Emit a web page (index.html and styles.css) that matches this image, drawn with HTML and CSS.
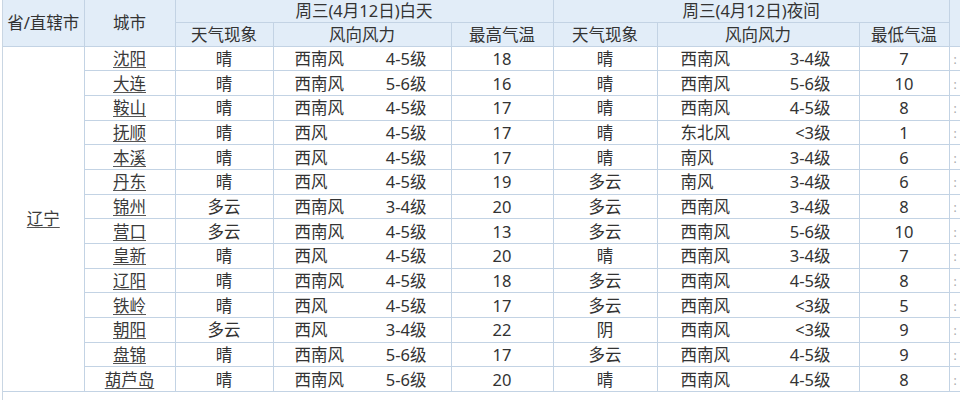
FILE: index.html
```html
<!DOCTYPE html>
<html lang="zh-CN">
<head>
<meta charset="utf-8">
<title>辽宁天气预报</title>
<link rel="stylesheet" href="styles.css">
</head>
<body>
<div class="wrap">
<table class="wx">
<colgroup>
<col class="c-prov"><col class="c-city"><col class="c-wea"><col class="c-wind"><col class="c-temp"><col class="c-wea2"><col class="c-wind2"><col class="c-temp2"><col class="c-extra">
</colgroup>
<thead>
<tr class="h1">
<th rowspan="2">省/直辖市</th>
<th rowspan="2">城市</th>
<th colspan="3">周三(4月12日)白天</th>
<th colspan="3">周三(4月12日)夜间</th>
<th rowspan="2" class="extra"></th>
</tr>
<tr class="h2">
<th>天气现象</th><th>风向风力</th><th>最高气温</th>
<th>天气现象</th><th>风向风力</th><th>最低气温</th>
</tr>
</thead>
<tbody>
<tr><td rowspan="14" class="prov"><a href="#">辽宁</a></td><td><a href="#">沈阳</a></td><td>晴</td><td class="wind"><span>西南风</span><span>4-5级</span></td><td>18</td><td>晴</td><td class="wind n"><span>西南风</span><span>3-4级</span></td><td>7</td><td class="extra"><i>:</i></td></tr>
<tr><td><a href="#">大连</a></td><td>晴</td><td class="wind"><span>西南风</span><span>5-6级</span></td><td>16</td><td>晴</td><td class="wind n"><span>西南风</span><span>5-6级</span></td><td>10</td><td class="extra"><i>:</i></td></tr>
<tr><td><a href="#">鞍山</a></td><td>晴</td><td class="wind"><span>西南风</span><span>4-5级</span></td><td>17</td><td>晴</td><td class="wind n"><span>西南风</span><span>4-5级</span></td><td>8</td><td class="extra"><i>:</i></td></tr>
<tr><td><a href="#">抚顺</a></td><td>晴</td><td class="wind"><span>西风</span><span>4-5级</span></td><td>17</td><td>晴</td><td class="wind n"><span>东北风</span><span>&lt;3级</span></td><td>1</td><td class="extra"><i>:</i></td></tr>
<tr><td><a href="#">本溪</a></td><td>晴</td><td class="wind"><span>西风</span><span>4-5级</span></td><td>17</td><td>晴</td><td class="wind n"><span>南风</span><span>3-4级</span></td><td>6</td><td class="extra"><i>:</i></td></tr>
<tr><td><a href="#">丹东</a></td><td>晴</td><td class="wind"><span>西风</span><span>4-5级</span></td><td>19</td><td>多云</td><td class="wind n"><span>南风</span><span>3-4级</span></td><td>6</td><td class="extra"><i>:</i></td></tr>
<tr><td><a href="#">锦州</a></td><td>多云</td><td class="wind"><span>西南风</span><span>3-4级</span></td><td>20</td><td>多云</td><td class="wind n"><span>西南风</span><span>3-4级</span></td><td>8</td><td class="extra"><i>:</i></td></tr>
<tr><td><a href="#">营口</a></td><td>多云</td><td class="wind"><span>西南风</span><span>4-5级</span></td><td>13</td><td>多云</td><td class="wind n"><span>西南风</span><span>5-6级</span></td><td>10</td><td class="extra"><i>:</i></td></tr>
<tr><td><a href="#">皇新</a></td><td>晴</td><td class="wind"><span>西风</span><span>4-5级</span></td><td>20</td><td>晴</td><td class="wind n"><span>西南风</span><span>3-4级</span></td><td>7</td><td class="extra"><i>:</i></td></tr>
<tr><td><a href="#">辽阳</a></td><td>晴</td><td class="wind"><span>西南风</span><span>4-5级</span></td><td>18</td><td>多云</td><td class="wind n"><span>西南风</span><span>4-5级</span></td><td>8</td><td class="extra"><i>:</i></td></tr>
<tr><td><a href="#">铁岭</a></td><td>晴</td><td class="wind"><span>西风</span><span>4-5级</span></td><td>17</td><td>多云</td><td class="wind n"><span>西南风</span><span>&lt;3级</span></td><td>5</td><td class="extra"><i>:</i></td></tr>
<tr><td><a href="#">朝阳</a></td><td>多云</td><td class="wind"><span>西风</span><span>3-4级</span></td><td>22</td><td>阴</td><td class="wind n"><span>西南风</span><span>&lt;3级</span></td><td>9</td><td class="extra"><i>:</i></td></tr>
<tr><td><a href="#">盘锦</a></td><td>晴</td><td class="wind"><span>西南风</span><span>5-6级</span></td><td>17</td><td>多云</td><td class="wind n"><span>西南风</span><span>4-5级</span></td><td>9</td><td class="extra"><i>:</i></td></tr>
<tr><td><a href="#">葫芦岛</a></td><td>晴</td><td class="wind"><span>西南风</span><span>5-6级</span></td><td>20</td><td>晴</td><td class="wind n"><span>西南风</span><span>4-5级</span></td><td>8</td><td class="extra"><i>:</i></td></tr>
</tbody>
</table>
</div>
</body>
</html>
```
FILE: styles.css
```css
html, body {
  margin: 0;
  padding: 0;
  background: #fff;
  overflow: hidden;
  height: 400px;
}
body {
  font-family: "Noto Sans", "Noto Sans CJK SC", sans-serif;
  font-size: 16.5px;
  color: #333;
}
.wrap {
  margin-left: 2px;
  width: 990px;
  height: 420px;
  border-left: 1px solid #c9d6e3;
}
.wx {
  border-collapse: collapse;
  table-layout: fixed;
  width: 986px;
}
.c-prov { width: 81px; }
.c-city { width: 91px; }
.c-wea { width: 98px; }
.c-wind { width: 178px; }
.c-temp { width: 102px; }
.c-wea2 { width: 104px; }
.c-wind2 { width: 202px; }
.c-temp2 { width: 90px; }
.c-extra { width: 40px; }

.wx th, .wx td {
  border: 1px solid #c3d3e4;
  padding: 0;
  text-align: center;
  white-space: nowrap;
  overflow: hidden;
  line-height: 21px;
}
.wx thead tr:first-child th {
  border-top: 0;
}
.wx tr:first-child th:first-child,
.wx td.prov {
  border-left: 0;
}
.wx th {
  background: #e2edf8;
  font-weight: normal;
}
.h1 { height: 22px; }
.h2 { height: 24px; }
.wx tbody tr { height: 24.7px; }
.wx td {
  background: #fff;
}
.wx a {
  color: #3a3a3a;
  text-decoration: underline;
  text-decoration-color: #555;
  text-underline-offset: 2px;
}
.wx td.prov {
  background: #fff;
}
.wx td.wind {
  text-align: left;
}
.wind span:first-child {
  float: left;
  padding-left: 21px;
}
.wind span:last-child {
  float: right;
  padding-right: 24px;
}
.wind.n span:first-child { padding-left: 23px; }
.wind.n span:last-child { padding-right: 28px; }
.wx .extra {
  text-align: left;
  border-right: 0;
}
.extra i {
  font-style: normal;
  color: #aaa;
  padding-left: 4px;
  font-size: 12px;
}
```
